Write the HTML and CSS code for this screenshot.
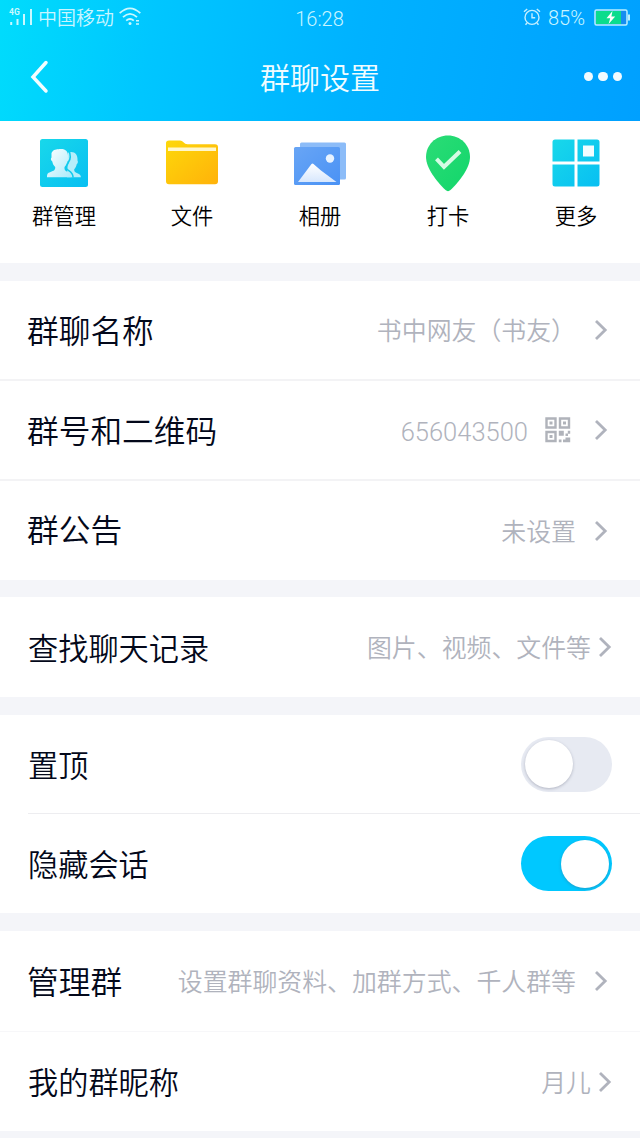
FILE: index.html
```html
<!DOCTYPE html>
<html lang="zh-CN">
<head>
    <meta charset="UTF-8">
    <meta name="viewport" content="width=device-width, initial-scale=1.0">
    <title>群聊设置</title>
    <link rel="stylesheet" href="styles.css">
</head>
<body>

    <!-- Shared icons -->
    <svg class="defs" width="0" height="0">
        <symbol id="chevron" viewBox="0 0 14 22">
            <path d="M2 2 L11.2 11 L2 20" fill="none" stroke="#b0b3bd" stroke-width="2.8"/>
        </symbol>
    </svg>

    <header class="header">
        <div class="status-bar">
            <div class="status-left">
                <svg class="signal" width="25" height="20" viewBox="0 0 25 20">
                    <text x="0" y="6.5">4G</text>
                    <path d="M2.2 14v3M8.5 11v6M15 6v11M22 1v16" stroke="#c9f8ff" stroke-width="2"/>
                </svg>
                <span class="carrier">中国移动</span>
                <svg class="wifi" width="22" height="20" viewBox="0 0 22 20">
                    <g fill="none" stroke="#c9f8ff" stroke-width="1.8">
                        <path d="M.7 6.2Q11-3.5 21.3 6.2"/>
                        <path d="M4 10.2Q11 3.6 18 10.2"/>
                        <path d="M7.2 13.6Q11 10.3 14.8 13.6"/>
                    </g>
                    <circle cx="11" cy="16.6" r="1.5" fill="#c9f8ff"/>
                    <path d="M17 13.8h3M17 17h3" stroke="#c9f8ff" stroke-width="1.4"/>
                </svg>
            </div>
            <span class="time">16:28</span>
            <div class="status-right">
                <svg width="18" height="18" viewBox="0 0 18 18" fill="none" stroke="#c4efff" stroke-width="1.4">
                    <circle cx="9" cy="9.4" r="7"/>
                    <path d="M9 5.3v4.4h3.2M1 3.8 4.2 1M17 3.8 13.8 1M4 15 2.5 16.8M14 15l1.5 1.8"/>
                </svg>
                <span class="percent">85%</span>
                <svg width="36" height="17" viewBox="0 0 36 17">
                    <rect x="1" y="1" width="32" height="15" rx="1.5" fill="#168df0" stroke="#b9efff" stroke-width="1.5"/>
                    <rect x="2" y="2" width="25" height="13" fill="#0bdc8d"/>
                    <path d="M34 5.5h2v6h-2z" fill="#b9efff"/>
                    <path d="M18.5 2 12.5 9.3h3.7L14.6 15l6.6-7.6h-3.8z" fill="#fff"/>
                </svg>
            </div>
        </div>
        <div class="nav">
            <svg width="20" height="34" viewBox="0 0 20 34">
                <path d="M17 2.5 4 17l13 14" fill="none" stroke="#f2fdff" stroke-width="3.5" stroke-linecap="round"/>
            </svg>
            <h1>群聊设置</h1>
            <div class="dots"><i></i><i></i><i></i></div>
        </div>
    </header>

    <!-- Shortcuts -->
    <div class="actions">
        <div class="action">
            <svg width="60" height="60" viewBox="0 0 60 60">
                <defs>
                    <linearGradient id="cyan" x1="0" y1="0" x2="1" y2="1">
                        <stop offset="0" stop-color="#18d8ea"/>
                        <stop offset="1" stop-color="#08bff2"/>
                    </linearGradient>
                    <linearGradient id="people" x1="0" y1="0" x2="1" y2="1">
                        <stop offset="0" stop-color="#fff"/>
                        <stop offset="1" stop-color="#a9eafa"/>
                    </linearGradient>
                </defs>
                <rect x="6" y="6" width="48" height="48" rx="2.5" fill="url(#cyan)"/>
                <path d="M34 19.5c6-2 10 1.5 9.5 8 .8 1 .3 3-.8 3.800-.4 2.200-1.200 3.700-2.500 5-.1 2.400.8 3 3.200 4 2.300.9 3.300 1.500 3.500 4H33z" fill="#b5eefa"/>
                <path d="M17.5 20c2-4 5-3.500 8-4 6-.5 9 2 8.500 8.500 1.200.8.800 3-.7 4-.5 2.500-1.200 4-2.800 5.500-.3 3 .7 3.800 3.500 5 2.500 1 3.500 2 3.500 5.300H13c0-3.300.5-4.300 3.500-5.300 3.500-1.300 5-2 4.700-5-1.600-1.500-2.400-3-2.900-5.500-1.500-1-1.900-3-.8-4z" fill="url(#people)"/>
                <path d="M34.800 18c2.200 3.500 1.800 8.500-.3 11-.8 2.500-2.700 3.800-2.200 6.300 1.200 3 6.500 2 6.800 9.200" fill="none" stroke="#10cbed" stroke-width="1.6"/>
            </svg>
            <span>群管理</span>
        </div>
        <div class="action">
            <svg width="60" height="60" viewBox="0 0 60 60">
                <defs>
                    <linearGradient id="folder" x1="0" y1="0" x2="1" y2="1">
                        <stop offset="0" stop-color="#fdd80a"/>
                        <stop offset="1" stop-color="#ffb20a"/>
                    </linearGradient>
                </defs>
                <path d="M4 10q0-2.500 3-2.500h11q2 0 3.500 1.800Q23 11.200 25.500 11.200H53q3 0 3 3v34q0 3-3 3H7q-3 0-3-3z" fill="url(#folder)"/>
                <path d="M6 14.500h48v3.600H6z" fill="#fff7cc"/>
            </svg>
            <span>文件</span>
        </div>
        <div class="action">
            <svg width="60" height="60" viewBox="0 0 60 60">
                <defs>
                    <linearGradient id="photo" x1="0" y1="0" x2="1" y2="1">
                        <stop offset="0" stop-color="#68a5f5"/>
                        <stop offset="1" stop-color="#4a92f5"/>
                    </linearGradient>
                    <linearGradient id="hill" x1="0" y1="0" x2="0" y2="1">
                        <stop offset="0" stop-color="#fff"/>
                        <stop offset="1" stop-color="#d7e7fd"/>
                    </linearGradient>
                </defs>
                <rect x="10" y="9.5" width="46" height="37" rx="1.5" fill="#8cbcf8"/>
                <rect x="4" y="14" width="46" height="38" rx="1.5" fill="url(#photo)"/>
                <path d="M8 49 21.5 31q1-1 2 0L31 37.500l15.500 11.500z" fill="url(#hill)"/>
                <circle cx="40" cy="25.5" r="4.2" fill="#e8f3ff"/>
            </svg>
            <span>相册</span>
        </div>
        <div class="action">
            <svg width="60" height="60" viewBox="0 0 60 60">
                <defs>
                    <linearGradient id="pin" x1="0" y1="0" x2="1" y2="1">
                        <stop offset="0" stop-color="#2bdc76"/>
                        <stop offset="1" stop-color="#12d66b"/>
                    </linearGradient>
                </defs>
                <path d="M30 2.5C17.5 2.5 8 12 8 24 8 35 19 49 27.5 57q2.500 2.300 5 0C41 49 52 35 52 24 52 12 42.500 2.500 30 2.500z" fill="url(#pin)"/>
                <path d="m18.500 25.800 7.500 8L42 18.500" fill="none" stroke="#d5fbe5" stroke-width="4"/>
            </svg>
            <span>打卡</span>
        </div>
        <div class="action">
            <svg width="60" height="60" viewBox="0 0 60 60">
                <path d="M9 6.500h19.500v22h-22V9q0-2.500 2.500-2.500zM31.500 6.500H51q2.500 0 2.500 2.500v19.500h-22zM6.500 31.500h22v22H9q-2.500 0-2.500-2.500zM31.500 31.500h22V51q0 2.500-2.500 2.500H31.500z" fill="url(#cyan)"/>
                <path d="M37 12.500h11v11H37z" fill="#f2fdff"/>
            </svg>
            <span>更多</span>
        </div>
    </div>

    <div class="group basic">
        <div class="row">
            <span class="label">群聊名称</span>
            <span class="value">书中网友（书友）</span>
            <svg class="arrow"><use href="#chevron"/></svg>
        </div>
        <div class="row">
            <span class="label">群号和二维码</span>
            <span class="value number">656043500</span>
            <svg class="qr" width="26" height="26" viewBox="0 0 26 26">
                <path d="M1.500 1.500h9v9h-9zM15 1.500h9v9h-9zM1.500 15h9v9h-9z" fill="none" stroke="#b0b3ba" stroke-width="2.4"/>
                <path d="M4.500 4.500h3v3h-3zM18 4.500h3v3h-3zM4.500 18h3v3h-3zM13.800 13.800h5v5h-5zM22.800 13.800h2.400v3h-2.400zM20.500 16.500h2.500v2.500h-2.500zM13.800 22.500h2.700v2.700h-2.700zM18 22.500h2.500V20.500h4.700v4.700H18z" fill="#b0b3ba"/>
            </svg>
            <svg class="arrow"><use href="#chevron"/></svg>
        </div>
        <div class="row">
            <span class="label">群公告</span>
            <span class="value">未设置</span>
            <svg class="arrow"><use href="#chevron"/></svg>
        </div>
    </div>

    <div class="group compact history">
        <div class="row">
            <span class="label">查找聊天记录</span>
            <span class="value">图片、视频、文件等</span>
            <svg class="arrow"><use href="#chevron"/></svg>
        </div>
    </div>

    <div class="group compact inset">
        <div class="row">
            <span class="label">置顶</span>
            <div class="switch"></div>
        </div>
        <div class="row">
            <span class="label">隐藏会话</span>
            <div class="switch on"></div>
        </div>
    </div>

    <div class="group manage">
        <div class="row">
            <span class="label">管理群</span>
            <span class="value">设置群聊资料、加群方式、千人群等</span>
            <svg class="arrow"><use href="#chevron"/></svg>
        </div>
        <div class="row compact">
            <span class="label">我的群昵称</span>
            <span class="value">月儿</span>
            <svg class="arrow"><use href="#chevron"/></svg>
        </div>
    </div>

</body>
</html>
```

FILE: styles.css
```css
* {
    box-sizing: border-box;
}

body {
    margin: 0;
    width: 640px;
    height: 1138px;
    overflow: hidden;
    background-color: #f4f5f9;
    font-family: Roboto, "Noto Sans CJK SC", sans-serif;
    font-weight: 350;
    color: #03081a;
}

svg {
    display: block;
    flex: none;
}

.defs {
    position: absolute;
}

/* Header */
.header {
    height: 121px;
    background: linear-gradient(100deg, #00dcfc 0%, #00c6ff 24%, #00b2ff 55%, #00a0ff 100%);
    color: #f0fcff;
}

.status-bar {
    display: grid;
    grid-template-columns: 1fr auto 1fr;
    align-items: center;
    height: 32px;
    padding: 0 10px 0 9px;
    font-size: 19px;
    line-height: 30px;
    color: #c9f5ff;
}

.status-left, .status-right {
    display: flex;
    align-items: center;
}

.status-right {
    justify-content: flex-end;
}

.signal text {
    font: 700 8.5px Roboto, sans-serif;
    fill: #c9f8ff;
}

.signal {
    margin-top: 1px;
}

.carrier {
    margin-left: 4px;
    padding-top: 4px;
}

.wifi {
    margin: 0 0 1px 5px;
}

.time {
    padding-top: 3px;
    font-size: 20px;
}

.percent {
    margin: 0 9px 0 7px;
    padding-top: 1px;
    font-size: 20px;
}

.nav {
    display: grid;
    grid-template-columns: 1fr auto 1fr;
    align-items: center;
    height: 89px;
    padding: 0 18px 0 29px;
}

.nav h1 {
    margin: 0 11px 0 0;
    padding-top: 4px;
    font-size: 30px;
    line-height: 44px;
    font-weight: 350;
}

.dots {
    display: flex;
    justify-content: flex-end;
    gap: 5px;
}

.dots i {
    width: 9.5px;
    height: 9.5px;
    border-radius: 50%;
    background-color: #f2fbff;
}

/* Shortcuts */
.actions {
    display: grid;
    grid-template-columns: repeat(5, 1fr);
    height: 142px;
    padding-top: 12px;
    background-color: #fff;
}

.action {
    display: flex;
    flex-direction: column;
    align-items: center;
    font-size: 21.3px;
    line-height: 30px;
    color: #000;
}

.action span {
    margin-top: 9px;
}

/* Setting rows */
.group {
    margin-top: 18px;
    background-color: #fff;
}

.row {
    display: flex;
    align-items: center;
    height: 100px;
    padding: 0 32px 0 27px;
}

.row + .row {
    border-top: 1px solid #ededf0;
}

.basic .row:first-child {
    height: 98px;
}

.basic .row + .row {
    border-top: 2px solid #f3f3f5;
}

.basic .row:last-child {
    height: 101px;
}

.history {
    margin-top: 17px;
}

.manage .row + .row {
    border-top-color: #f7f7f9;
}

.label {
    flex: 1;
    padding-top: 5px;
    font-size: 31.7px;
    line-height: 46px;
    white-space: nowrap;
}

.value {
    padding-top: 4px;
    font-size: 24.9px;
    line-height: 36px;
    color: #b0b3bd;
    white-space: nowrap;
}

.basic .row:last-child .label {
    padding-top: 2px;
}

.number {
    margin: 0 17px 0 0;
    font-size: 25.5px;
    font-weight: 300;
}

.qr {
    margin: 0 5px 1px 0;
}

.arrow {
    width: 14px;
    height: 22px;
    margin-left: 18px;
}

.compact .row, .row.compact {
    padding: 0 28px;
}

.compact .label {
    font-size: 30.2px;
}

.compact .arrow {
    margin-left: 7px;
}

.group.inset .row {
    margin-left: 28px;
    padding-left: 0;
}

.group.inset .row:first-child {
    height: 98px;
}

.switch {
    width: 91px;
    height: 55px;
    padding: 3.5px;
    border-radius: 28px;
    background-color: #e7eaf2;
}

.switch::after {
    content: "";
    display: block;
    width: 48px;
    height: 48px;
    border-radius: 50%;
    background-color: #fff;
    box-shadow: 0 1px 3px rgba(80, 85, 110, 0.35);
}

.switch.on {
    background-color: #00c8ff;
}

.switch.on::after {
    margin-left: auto;
}
```
